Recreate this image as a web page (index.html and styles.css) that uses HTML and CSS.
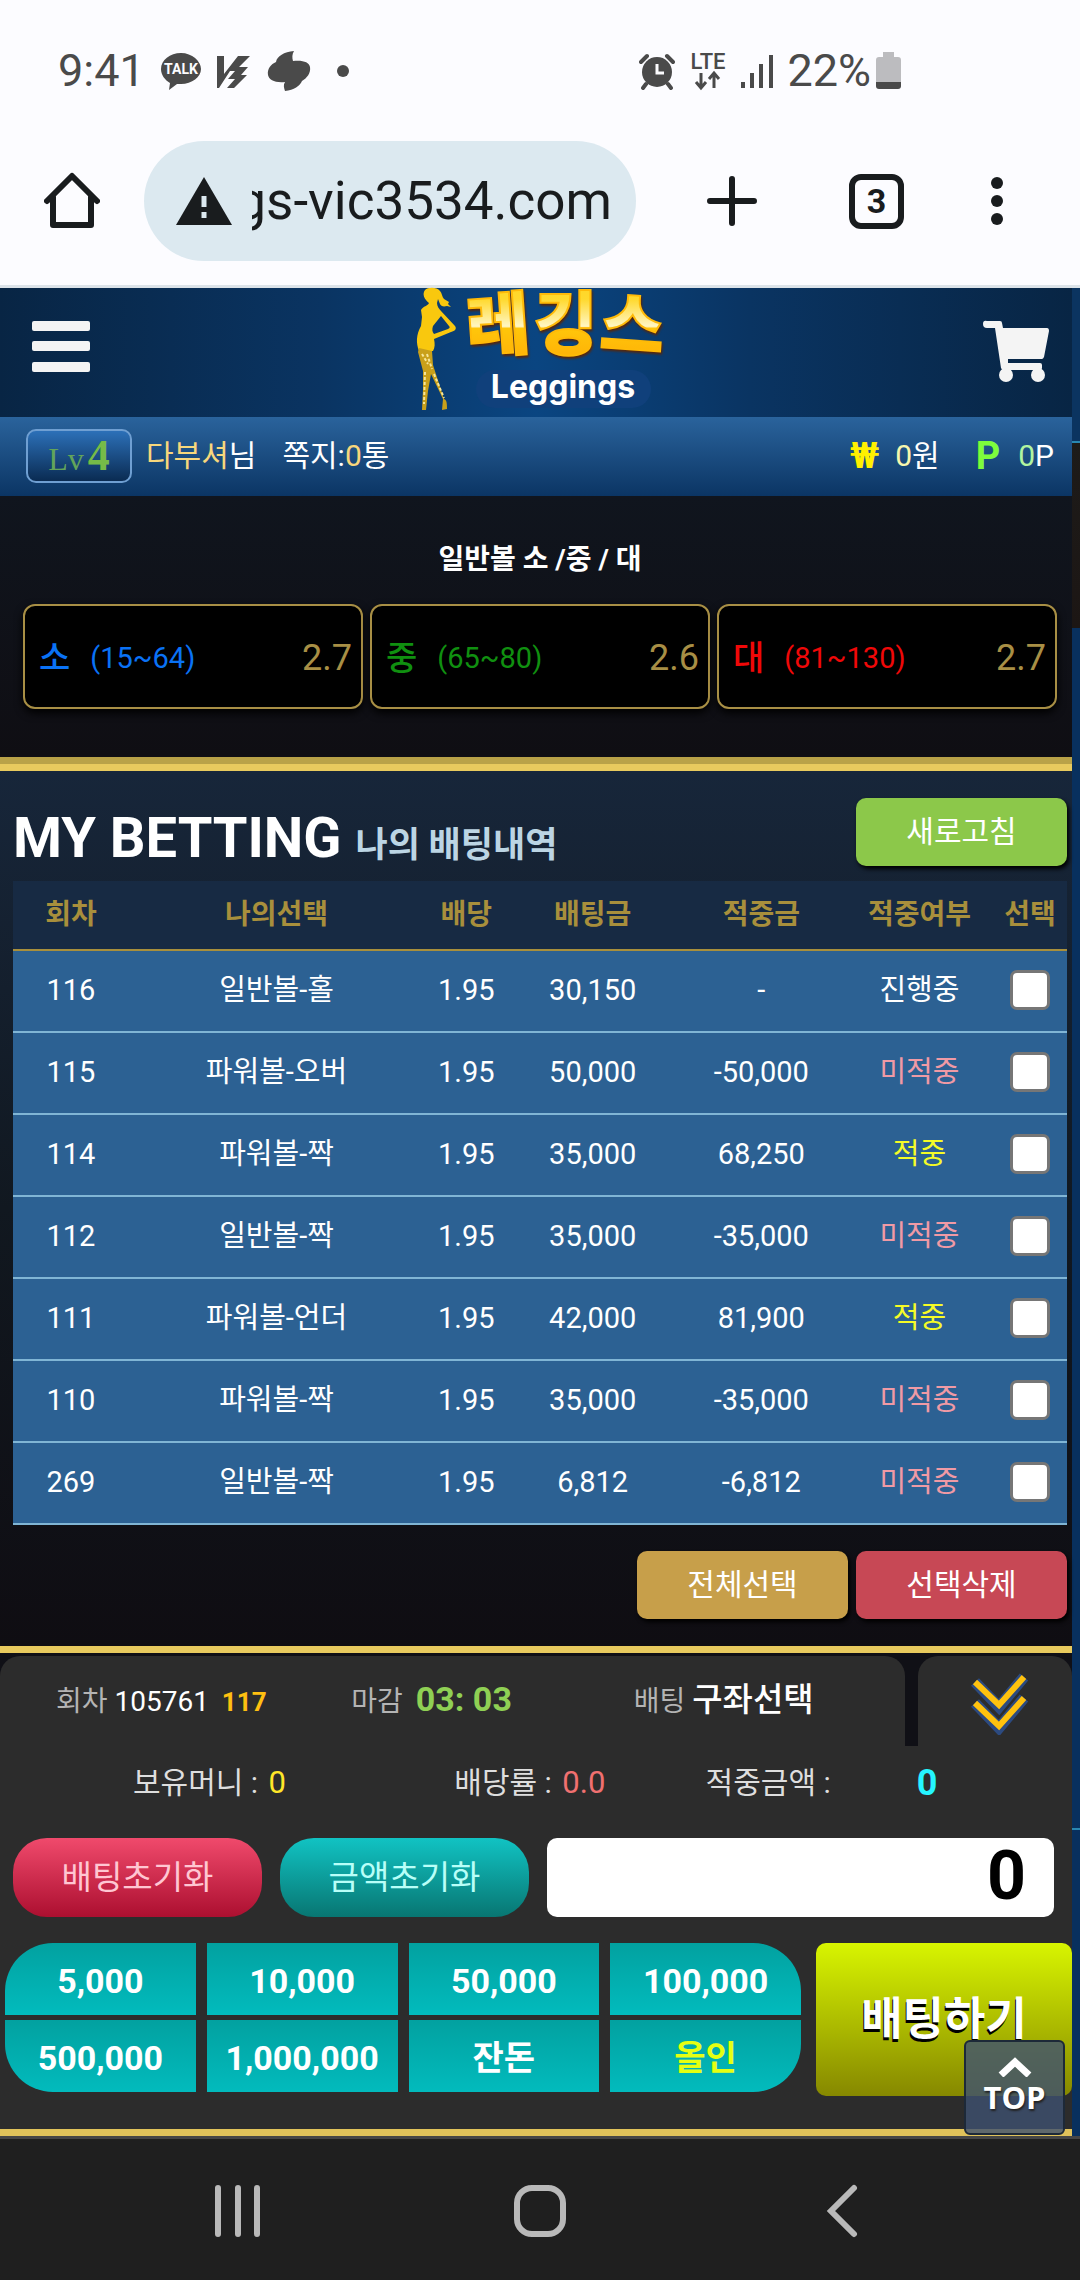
FILE: index.html
```html
<!DOCTYPE html>
<html lang="ko">
  <head>
    <meta charset="utf-8">
    <meta name="viewport" content="width=device-width, initial-scale=1">
    <title>레깅스</title>
    <link rel="stylesheet" href="styles.css">
  </head>
  <body>
    <header class="chrome">
      <div class="status">
        <span class="time">9:41</span>
        <svg width="40" height="40" viewBox="0 0 40 40">
          <path d="M20 2C9 2 0 9 0 18c0 6 4 11 9 14l-1 7 8-6h4c11 0 20-7 20-15S31 2 20 2z" fill="#4a4a4a"/>
          <text x="20" y="23" text-anchor="middle" font-size="14" font-weight="700" fill="#fcfcff">TALK</text>
        </svg>
        <svg width="34" height="36" viewBox="0 0 34 36" fill="#4a4a4a">
          <path d="M0 3h7v18L21 3h12L22 14h9l-7 8h6L17 35h-7l8-9h-7l7-8h-5L2 35H0z"/>
        </svg>
        <svg width="44" height="42" viewBox="0 0 44 42" fill="#4a4a4a">
          <path d="M27 1C17 2 10 6 9 12 4 14 0 19 1 25c1 5 7 8 17 7-2 3-1 6 0 9 9-1 15-5 17-10 5-3 9-8 8-14-1-5-7-7-17-6-1-3-1-7 1-10z"/>
        </svg>
        <span class="dot"></span>
        <div class="status-right">
          <svg width="36" height="38" viewBox="0 0 36 38">
            <circle cx="18" cy="20" r="15" fill="#4a4a4a"/>
            <path d="M2 10l6-6M34 10l-6-6M7 32l-3 4M29 32l3 4" stroke="#4a4a4a" stroke-width="4" stroke-linecap="round"/>
            <path d="M18 12v9h7" stroke="#fcfcff" stroke-width="3" fill="none"/>
          </svg>
          <svg width="38" height="40" viewBox="0 0 38 40">
            <text x="19" y="18" text-anchor="middle" font-size="22" font-weight="500" fill="#4a4a4a">LTE</text>
            <path d="M12 22v14M7 31l5 6 5-6M25 37V23M20 28l5-6 5 6" stroke="#4a4a4a" stroke-width="3" fill="none"/>
          </svg>
          <svg width="32" height="36" viewBox="0 0 32 36">
            <path d="M2 29v6M11 20v15M20 11v24M30 2v33" stroke="#4a4a4a" stroke-width="4"/>
          </svg>
          <span class="battery">22%
            <svg width="25" height="37" viewBox="0 0 25 37">
              <path d="M7 0h11v5h4q3 0 3 3v24H0V8q0-3 3-3h4z" fill="#bcbcbf"/>
              <path d="M0 30h25v4q0 3-3 3H3q-3 0-3-3z" fill="#4a4a4a"/>
            </svg>
          </span>
        </div>
      </div>
      <div class="toolbar">
        <button class="icon-btn" aria-label="홈">
          <svg width="56" height="58" viewBox="0 0 56 58">
            <path d="M3 29L28 4l25 25M9 25v28h38V25" fill="none" stroke="#191c1e" stroke-width="6" stroke-linejoin="round" stroke-linecap="round"/>
          </svg>
        </button>
        <div class="address">
          <svg width="56" height="48" viewBox="0 0 56 48">
            <path d="M28 0l28 48H0z" fill="#191c1e"/>
            <path d="M28 19v11M28 35v6" stroke="#dce9f0" stroke-width="5"/>
          </svg>
          <span class="url">gs-vic3534.com</span>
        </div>
        <button class="icon-btn plus" aria-label="새 탭">
          <svg width="50" height="50" viewBox="0 0 50 50">
            <path d="M25 3v44M3 25h44" stroke="#191c1e" stroke-width="6" stroke-linecap="round"/>
          </svg>
        </button>
        <button class="icon-btn tabs">3</button>
        <button class="icon-btn more" aria-label="메뉴">
          <svg width="14" height="50" viewBox="0 0 14 50" fill="#191c1e">
            <circle cx="7" cy="7" r="6"/>
            <circle cx="7" cy="25" r="6"/>
            <circle cx="7" cy="43" r="6"/>
          </svg>
        </button>
      </div>
    </header>

    <main class="site">
      <header class="site-head">
        <button class="icon-btn" aria-label="전체메뉴">
          <svg width="60" height="54" viewBox="0 0 60 54" fill="#f4f4f4">
            <rect x="1" y="1" width="58" height="10" rx="2"/>
            <rect x="1" y="21" width="58" height="10" rx="2"/>
            <rect x="1" y="42" width="58" height="10" rx="2"/>
          </svg>
        </button>
        <a href="#" class="logo">
          <svg width="280" height="129" viewBox="0 0 280 129">
            <defs>
              <linearGradient id="gold" x1="0" y1="0" x2="0" y2="1">
                <stop offset="0" stop-color="#ffd21c"/>
                <stop offset="0.3" stop-color="#ffd92e"/>
                <stop offset="0.56" stop-color="#fff6c4"/>
                <stop offset="0.58" stop-color="#ffc60a"/>
                <stop offset="1" stop-color="#ffa806"/>
              </linearGradient>
            </defs>
            <path d="M25 2C28-1 37-1 40 3c2 2 2 6 4 8l5 3-1 2 3 3-4-1c-4 1-6 0-7-2l-2-5-1 4c0 3 2 6 4 8l14 15c2 3 0 5-4 6L34 51c1 5 1 8-1 12H19c-3-8-3-16 2-25l1-9-1-7c2-4 7-4 8-7-5-4-7-9-4-13zm16 26l-8 10c-1 3-1 6 1 8l14-5c2-1 2-2 1-3z" fill="#f9c80e" fill-rule="evenodd"/>
            <path d="M19 60l-1 4 5 19v18l-1 21h4l2-19 3-17 12 25-1 11 5-1c0-5 0-9-3-10L33 77l-1-14z" fill="#c9a01a"/>
            <path d="M22 66l6 10M27 66l5 15M25 84l-1 32M34 86l10 24" stroke="#f6e69a" stroke-width="2" stroke-dasharray="3 2" fill="none"/>
            <rect x="76" y="82" width="175" height="38" rx="19" fill="#10407b"/>
            <text class="logo-ko" x="68 134 199" y="64 61 60" rotate="-4 0 4">레깅스</text>
            <text class="logo-en" x="163" y="110">Leggings</text>
          </svg>
        </a>
        <a href="#" class="cart" aria-label="베팅카트">
          <svg width="66" height="62" viewBox="0 0 66 62" fill="#f4f4f4">
            <path d="M4 1h13q2 0 2 2l1 5h44q2 0 2 3l-5 26q-1 2-2 2H25v4h32q2 0 2 2v3q0 2-2 2H20q-1 0-2-2L12 8H4Q0 8 0 4t4-3z"/>
            <circle cx="23" cy="55" r="7"/>
            <circle cx="55" cy="55" r="7"/>
          </svg>
        </a>
      </header>

      <div class="user-bar">
        <span class="level">Lv<b>4</b></span>
        <span><span class="name">다부셔</span>님</span>
        <a href="#" class="memo">쪽지:<span class="name">0</span>통</a>
        <div class="wallet">
          <b class="won">₩</b>
          <span><span class="pale">0</span>원</span>
          <b class="point">P</b>
          <span><span class="mint">0</span>P</span>
        </div>
      </div>

      <section class="odds">
        <h3>일반볼 소 /중 / 대</h3>
        <div class="odds-list">
          <button class="odd small"><b>소</b><span>(15~64)</span><em>2.7</em></button>
          <button class="odd middle"><b>중</b><span>(65~80)</span><em>2.6</em></button>
          <button class="odd large"><b>대</b><span>(81~130)</span><em>2.7</em></button>
        </div>
      </section>

      <section class="history">
        <div class="history-head">
          <h2>MY BETTING <small>나의 배팅내역</small></h2>
          <button class="btn green">새로고침</button>
        </div>
        <table>
          <colgroup>
            <col class="c-round"><col class="c-pick"><col class="c-rate"><col class="c-money"><col class="c-money"><col class="c-result"><col class="c-check">
          </colgroup>
          <thead>
            <tr><th>회차</th><th>나의선택</th><th>배당</th><th>배팅금</th><th>적중금</th><th>적중여부</th><th>선택</th></tr>
          </thead>
          <tbody>
            <tr><td>116</td><td>일반볼-홀</td><td>1.95</td><td>30,150</td><td>-</td><td>진행중</td><td><input type="checkbox" aria-label="116 선택"></td></tr>
            <tr><td>115</td><td>파워볼-오버</td><td>1.95</td><td>50,000</td><td>-50,000</td><td class="lose">미적중</td><td><input type="checkbox" aria-label="115 선택"></td></tr>
            <tr><td>114</td><td>파워볼-짝</td><td>1.95</td><td>35,000</td><td>68,250</td><td class="win">적중</td><td><input type="checkbox" aria-label="114 선택"></td></tr>
            <tr><td>112</td><td>일반볼-짝</td><td>1.95</td><td>35,000</td><td>-35,000</td><td class="lose">미적중</td><td><input type="checkbox" aria-label="112 선택"></td></tr>
            <tr><td>111</td><td>파워볼-언더</td><td>1.95</td><td>42,000</td><td>81,900</td><td class="win">적중</td><td><input type="checkbox" aria-label="111 선택"></td></tr>
            <tr><td>110</td><td>파워볼-짝</td><td>1.95</td><td>35,000</td><td>-35,000</td><td class="lose">미적중</td><td><input type="checkbox" aria-label="110 선택"></td></tr>
            <tr><td>269</td><td>일반볼-짝</td><td>1.95</td><td>6,812</td><td>-6,812</td><td class="lose">미적중</td><td><input type="checkbox" aria-label="269 선택"></td></tr>
          </tbody>
        </table>
        <div class="history-foot">
          <button class="btn gold">전체선택</button>
          <button class="btn red">선택삭제</button>
        </div>
      </section>

      <section class="slip">
        <div class="slip-tabs">
          <div class="slip-info">
            <div><span class="label">회차</span> <span class="round">105761</span> <b class="turn">117</b></div>
            <div><span class="label">마감</span> <b class="clock">03: 03</b></div>
            <div><span class="label">배팅</span> <span class="pick">구좌선택</span></div>
          </div>
          <button class="fold" aria-label="접기">
            <svg width="62" height="64" viewBox="0 0 62 64" fill="none">
              <path d="M7 11l24 25L56 6M7 32l24 25 25-30" stroke="#2c4a80" stroke-width="11"/>
              <path d="M7 11l24 23L56 6M7 32l24 23 25-28" stroke="#ffc20e" stroke-width="6"/>
            </svg>
          </button>
        </div>
        <div class="slip-body">
          <div class="totals">
            <span>보유머니 : <span class="money">0</span></span>
            <span>배당률 : <span class="rate">0.0</span></span>
            <span>적중금액 :</span>
            <b class="prize">0</b>
          </div>
          <div class="amount">
            <button class="pill rose">배팅초기화</button>
            <button class="pill teal">금액초기화</button>
            <input type="text" value="0" aria-label="배팅금액">
          </div>
          <div class="stake">
            <div class="chips">
              <button>5,000</button>
              <button>10,000</button>
              <button>50,000</button>
              <button>100,000</button>
              <button>500,000</button>
              <button>1,000,000</button>
              <button>잔돈</button>
              <button class="all-in">올인</button>
            </div>
            <button class="bet">배팅하기</button>
          </div>
        </div>
      </section>

      <a href="#" class="top">
        <svg width="34" height="20" viewBox="0 0 34 20">
          <path d="M3 18L17 5l14 13" fill="none" stroke="#fff" stroke-width="7"/>
        </svg>
        TOP
      </a>
    </main>

    <nav class="android-nav">
      <button class="icon-btn" aria-label="최근 앱">
        <svg width="48" height="54" viewBox="0 0 48 54">
          <path d="M4 4v46M24 4v46M43 4v46" stroke="#b9b9b9" stroke-width="6" stroke-linecap="round"/>
        </svg>
      </button>
      <button class="icon-btn" aria-label="홈 화면">
        <svg width="54" height="54" viewBox="0 0 54 54">
          <rect x="4" y="4" width="46" height="46" rx="15" fill="none" stroke="#b9b9b9" stroke-width="6"/>
        </svg>
      </button>
      <button class="icon-btn" aria-label="뒤로">
        <svg width="32" height="54" viewBox="0 0 32 54">
          <path d="M28 4L5 27l23 23" fill="none" stroke="#b9b9b9" stroke-width="6" stroke-linecap="round"/>
        </svg>
      </button>
    </nav>
  </body>
</html>
```
FILE: styles.css
```css
* {
  box-sizing: border-box;
}
body {
  margin: 0;
  background: #1f1f1f;
  color: #fff;
  font-family: Roboto, "Noto Sans CJK KR", sans-serif;
  font-size: 28px;
  line-height: 40px;
}
button, input {
  margin: 0;
  padding: 0;
  border: 0;
  background: none;
  color: inherit;
  font: inherit;
}
a {
  color: inherit;
  text-decoration: none;
}
svg {
  display: block;
}
h2, h3 {
  margin: 0;
}
.icon-btn {
  display: flex;
  align-items: center;
  justify-content: center;
}

/* phone status bar and browser toolbar */
.chrome {
  background: #fcfcff;
  border-bottom: 3px solid #dce3e9;
}
.status {
  display: flex;
  align-items: center;
  gap: 16px;
  height: 141px;
  padding: 0 179px 0 58px;
  color: #4a4a4a;
  font-size: 45px;
  line-height: 56px;
}
.dot {
  width: 12px;
  height: 12px;
  margin-left: 10px;
  border-radius: 50%;
  background: #4a4a4a;
}
.status-right {
  display: flex;
  align-items: center;
  gap: 14px;
  margin-left: auto;
}
.battery {
  display: flex;
  align-items: center;
  gap: 5px;
}
.toolbar {
  display: flex;
  align-items: center;
  padding: 0 76px 24px 44px;
  color: #191c1e;
}
.address {
  display: flex;
  align-items: center;
  gap: 20px;
  flex: 1;
  min-width: 0;
  height: 120px;
  margin-left: 44px;
  padding: 0 24px 0 32px;
  border-radius: 60px;
  background: #dce9f0;
}
.address svg {
  flex: none;
}
/* long addresses keep their end in view */
.url {
  display: flex;
  justify-content: flex-end;
  flex: 1;
  min-width: 0;
  overflow: hidden;
  font-size: 53px;
  line-height: 80px;
  white-space: nowrap;
}
.plus {
  margin-left: 71px;
}
.tabs {
  width: 55px;
  height: 55px;
  margin-left: 92px;
  border: 6px solid #191c1e;
  border-radius: 12px;
  font-size: 34px;
  font-weight: 700;
}
.more {
  margin-left: 86px;
}

/* the page stops short of the right edge, the wallpaper shows there */
.site {
  position: relative;
  padding-right: 8px;
  background: linear-gradient(#0b3460 153px, #2987b1 153px, #2987b1 155px, #1d1b19 155px, #1c1614 340px, #08305e 340px, #08305e 1540px, #2987b1 1540px, #2987b1 1542px, #08305e 1542px);
}
.site-head {
  display: grid;
  grid-template-columns: 1fr auto 1fr;
  align-items: center;
  height: 129px;
  padding: 0 23px 0 31px;
  background: linear-gradient(90deg, #082544, #0a3462 30%, #0a4581 50%, #0a3462 70%, #082544);
}
.site-head .icon-btn {
  justify-self: start;
  margin-bottom: 12px;
}
.cart {
  justify-self: end;
  margin-bottom: 4px;
}
.logo svg {
  overflow: visible;
}
.logo-ko {
  font-family: "Noto Sans CJK KR", sans-serif;
  font-size: 69px;
  font-weight: 900;
  fill: url(#gold);
  stroke: #ffba08;
  stroke-width: 2px;
  filter: drop-shadow(1px 2px 1px #5a2608);
}
.logo-en {
  font-family: Inter, sans-serif;
  font-size: 32px;
  font-weight: 700;
  text-anchor: middle;
  fill: #fff;
}
.user-bar {
  display: flex;
  align-items: center;
  height: 79px;
  padding: 0 18px 2px 26px;
  background: linear-gradient(#2a639c, #0b3564);
  font-size: 30px;
}
.level {
  width: 106px;
  height: 54px;
  margin-right: 14px;
  border: 2px solid #6f9fd2;
  border-radius: 10px;
  background: linear-gradient(#2c70b8, #0a2b52);
  color: #62a45a;
  font-family: "Liberation Serif", serif;
  font-size: 32px;
  line-height: 50px;
  text-align: center;
}
.level b {
  margin-left: 4px;
  color: #76bb48;
  font-size: 44px;
}
.name {
  color: #f7d77c;
}
.memo {
  margin-left: 26px;
}
.wallet {
  display: flex;
  align-items: center;
  margin-left: auto;
}
.won {
  margin-right: 16px;
  color: #fff000;
  font-size: 36px;
}
.point {
  margin: 0 18px 0 36px;
  color: #7dfc3c;
  font-size: 38px;
}
.pale {
  color: #f6f7ae;
}
.mint {
  color: #b1f5a0;
}

.odds {
  padding: 44px 15px 48px 23px;
  border-bottom: 7px solid #b9a248;
  background: linear-gradient(#10151e, #0f0e13);
}
.odds h3 {
  margin-bottom: 24px;
  font-size: 28px;
  text-align: center;
}
.odds-list {
  display: grid;
  grid-template-columns: repeat(3, 1fr);
  gap: 7px;
}
.odd {
  display: flex;
  align-items: center;
  height: 105px;
  padding: 2px 9px 0 14px;
  border: 2px solid #a88f45;
  border-radius: 12px;
  background: #000;
  box-shadow: 0 4px 8px #000;
  font-size: 29px;
}
.odd b {
  margin-right: 20px;
  font-size: 34px;
  font-weight: 500;
}
.odd em {
  margin-left: auto;
  color: #a88f45;
  font-size: 36px;
  font-style: normal;
}
.small {
  color: #0a72f5;
}
.middle {
  color: #109010;
}
.large {
  color: #f00808;
}

.history {
  padding: 27px 5px 27px 13px;
  border-top: 7px solid #e8ca5e;
  border-bottom: 7px solid #e8ca5e;
  background: linear-gradient(#17263a, #111820 50%, #0f0d12);
}
.history-head {
  display: flex;
  justify-content: space-between;
  height: 83px;
}
.history h2 {
  padding-top: 10px;
  font-size: 56px;
  line-height: 60px;
}
.history small {
  color: #bcd5e4;
  font-size: 35px;
}
.btn {
  width: 211px;
  height: 68px;
  border-radius: 10px;
  box-shadow: 2px 3px 4px #000;
  font-size: 30px;
}
.green {
  background: #8cc84a;
}
.gold {
  background: #c79f4a;
}
.red {
  background: #c74855;
}
table {
  width: 100%;
  border-collapse: separate;
  border-spacing: 0;
  table-layout: fixed;
  text-align: center;
}
.c-round {
  width: 11%;
}
.c-pick {
  width: 28%;
}
.c-rate {
  width: 8%;
}
.c-money {
  width: 16%;
}
.c-result {
  width: 14%;
}
.c-check {
  width: 7%;
}
th {
  height: 70px;
  padding: 0;
  border-bottom: 2px solid #a88f3c;
  background: #172a43;
  color: #a88f3c;
  white-space: nowrap;
}
td {
  height: 82px;
  padding: 0 0 2px;
  border-bottom: 2px solid #80b5d5;
  background: #2c6193;
  font-size: 29px;
}
td input {
  display: block;
  width: 40px;
  height: 40px;
  margin: 0 auto;
  border: 3px solid #767676;
  border-radius: 7px;
  background: #fff;
  appearance: none;
}
.lose {
  color: #f09aa5;
}
.win {
  color: #f5fb27;
}
.history-foot {
  display: flex;
  justify-content: flex-end;
  gap: 8px;
  padding-top: 26px;
}

.slip {
  padding-top: 3px;
  border-bottom: 7px solid #e0c25a;
  background: #101016;
}
.slip-tabs {
  display: grid;
  grid-template-columns: 905fr 154fr;
  gap: 13px;
  height: 90px;
}
.slip-info, .fold {
  border-radius: 20px 20px 0 0;
  background: #2c2c2c;
}
.slip-info {
  display: grid;
  grid-template-columns: 295fr 282fr 271fr;
  align-items: baseline;
  padding: 23px 0 0 56px;
  white-space: nowrap;
}
.label {
  color: #b4b4b4;
}
.turn {
  margin-left: 6px;
  color: #ffc011;
  font-size: 26px;
}
.clock {
  margin-left: 6px;
  color: #8fd054;
  font-size: 34px;
}
.pick {
  font-size: 33px;
  font-weight: 500;
}
.fold {
  padding: 4px 0 0 8px;
}
.fold svg {
  margin: 0 auto;
}
.slip-body {
  padding-bottom: 33px;
  background: #2c2c2c;
}
.totals {
  display: grid;
  grid-template-columns: 321fr 251fr 211fr 155fr;
  align-items: center;
  height: 92px;
  padding: 0 0 18px 133px;
  color: #dedede;
  font-size: 30px;
}
.money, .rate {
  margin-left: 3px;
  font-size: 31px;
}
.money {
  color: #ffe629;
}
.rate {
  color: #f07070;
}
.prize {
  color: #25f5ff;
  font-size: 36px;
}
.amount {
  display: grid;
  grid-template-columns: 249fr 249fr 507fr;
  grid-template-rows: 79px;
  gap: 18px;
  padding: 0 18px 0 13px;
}
.pill {
  border-radius: 34px;
  font-size: 33px;
}
.rose {
  background: linear-gradient(#f04a6c, #ac0f30);
  color: #ffc6d2;
}
.teal {
  background: linear-gradient(#11c3c3, #087672);
  color: #b8fff8;
}
.amount input {
  min-width: 0;
  height: 100%;
  padding: 0 28px 4px 0;
  border-radius: 10px;
  background: #fff;
  color: #000;
  font-size: 68px;
  font-weight: 700;
  text-align: right;
}
.stake {
  display: grid;
  grid-template-columns: 796fr 256fr;
  gap: 15px;
  padding: 26px 0 0 5px;
}
.chips {
  display: grid;
  grid-template-columns: repeat(4, 1fr);
  grid-auto-rows: 72px;
  gap: 5px 11px;
}
.chips button {
  padding-top: 4px;
  background: linear-gradient(#02a1a0, #02bbbd);
  font-size: 34px;
  font-weight: 700;
}
.chips button:nth-child(1) {
  border-top-left-radius: 48px;
}
.chips button:nth-child(4) {
  border-top-right-radius: 48px;
}
.chips button:nth-child(5) {
  border-bottom-left-radius: 48px;
}
.chips button:nth-child(8) {
  border-bottom-right-radius: 48px;
}
.chips .all-in {
  color: #e5ff12;
}
.bet {
  height: 153px;
  border-radius: 10px;
  background: linear-gradient(#d8f500, #868800);
  font-size: 45px;
  font-weight: 700;
  text-shadow: -1px 3px 0 #000;
}
.top {
  position: absolute;
  right: 15px;
  bottom: 1px;
  display: flex;
  flex-direction: column;
  align-items: center;
  width: 101px;
  height: 95px;
  padding-top: 15px;
  border: 2px solid #1d2938;
  border-radius: 6px;
  background: rgba(62, 81, 113, 0.8);
  font-family: "Open Sans", sans-serif;
  font-size: 31px;
  font-weight: 700;
  text-shadow: 1px 2px 2px #222;
}

.android-nav {
  display: grid;
  grid-template-columns: repeat(3, 28%);
  justify-content: center;
  height: 144px;
  padding-top: 2px;
  border-top: 3px solid #464646;
  background: #1f1f1f;
}
```
